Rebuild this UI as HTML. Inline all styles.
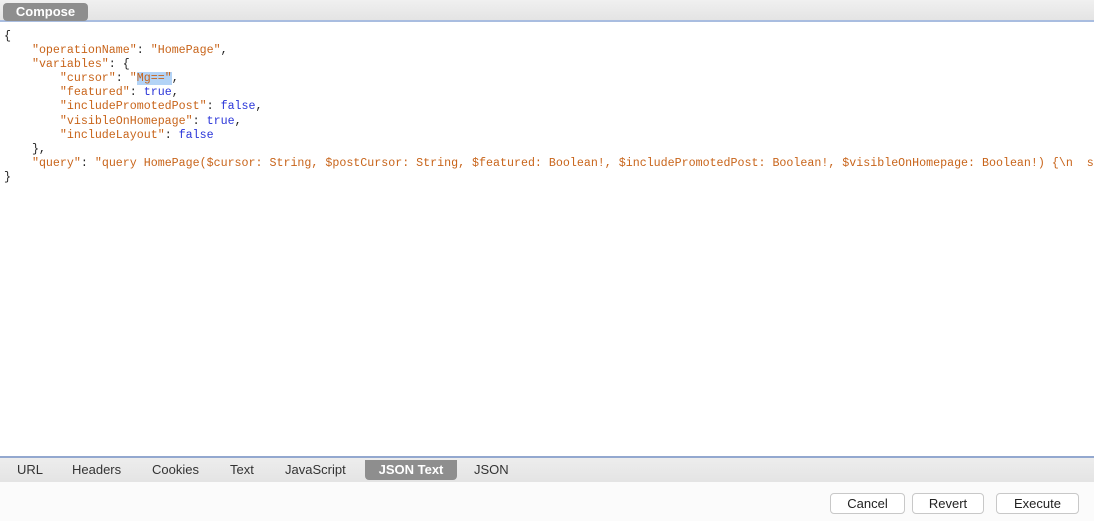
<!DOCTYPE html>
<html><head><style>
*{margin:0;padding:0;box-sizing:border-box}
body{width:1094px;height:521px;overflow:hidden;background:#fff;font-family:"Liberation Sans",sans-serif;position:relative}
.top{position:absolute;left:0;top:0;width:1094px;height:22px;background:linear-gradient(#f0f0f0,#e4e4e4);border-bottom:2px solid #a9bde0}
.compose{position:absolute;left:3px;top:3px;width:85px;height:18px;background:#8e8e8e;border-radius:4px;color:#fff;font-weight:bold;font-size:13px;text-align:center;line-height:18px}
pre{position:absolute;left:4px;top:30px;font-family:"Liberation Mono",monospace;font-size:11.65px;line-height:14.1px;color:#222;white-space:pre}
.s{color:#c8641a}.b{color:#2a35d8}.h{background:#b3d3f6}
.tabs{position:absolute;left:0;top:456px;width:1094px;height:26px;background:linear-gradient(#ededed,#e4e4e4);border-top:2px solid #93a8cf}
.tab{position:absolute;top:2px;font-size:13px;color:#333;height:20px;line-height:20px}
.act{background:#8e8e8e;color:#fff;font-weight:bold;border-radius:0 0 4px 4px;text-align:center}
.bot{position:absolute;left:0;top:482px;width:1094px;height:39px;background:#fbfbfb}
.btn{position:absolute;top:493px;height:21px;border:1px solid #c8c8c8;border-radius:4px;background:#fff;font-size:13px;color:#222;text-align:center;line-height:19px}
</style></head><body>
<div class="top"><div class="compose">Compose</div></div>
<pre>{
    <span class="s">"operationName"</span>: <span class="s">"HomePage"</span>,
    <span class="s">"variables"</span>: {
        <span class="s">"cursor"</span>: <span class="s">"<span class="h">Mg=="</span></span>,
        <span class="s">"featured"</span>: <span class="b">true</span>,
        <span class="s">"includePromotedPost"</span>: <span class="b">false</span>,
        <span class="s">"visibleOnHomepage"</span>: <span class="b">true</span>,
        <span class="s">"includeLayout"</span>: <span class="b">false</span>
    },
    <span class="s">"query"</span>: <span class="s">"query HomePage($cursor: String, $postCursor: String, $featured: Boolean!, $includePromotedPost: Boolean!, $visibleOnHomepage: Boolean!) {\n  s</span>
}</pre>
<div class="tabs">
<div class="tab" style="left:17px">URL</div>
<div class="tab" style="left:72px">Headers</div>
<div class="tab" style="left:152px">Cookies</div>
<div class="tab" style="left:230px">Text</div>
<div class="tab" style="left:285px">JavaScript</div>
<div class="tab act" style="left:365px;width:92px">JSON Text</div>
<div class="tab" style="left:474px">JSON</div>
</div>
<div class="bot"></div>
<div class="btn" style="left:830px;width:75px">Cancel</div>
<div class="btn" style="left:912px;width:72px">Revert</div>
<div class="btn" style="left:996px;width:83px">Execute</div>
</body></html>
